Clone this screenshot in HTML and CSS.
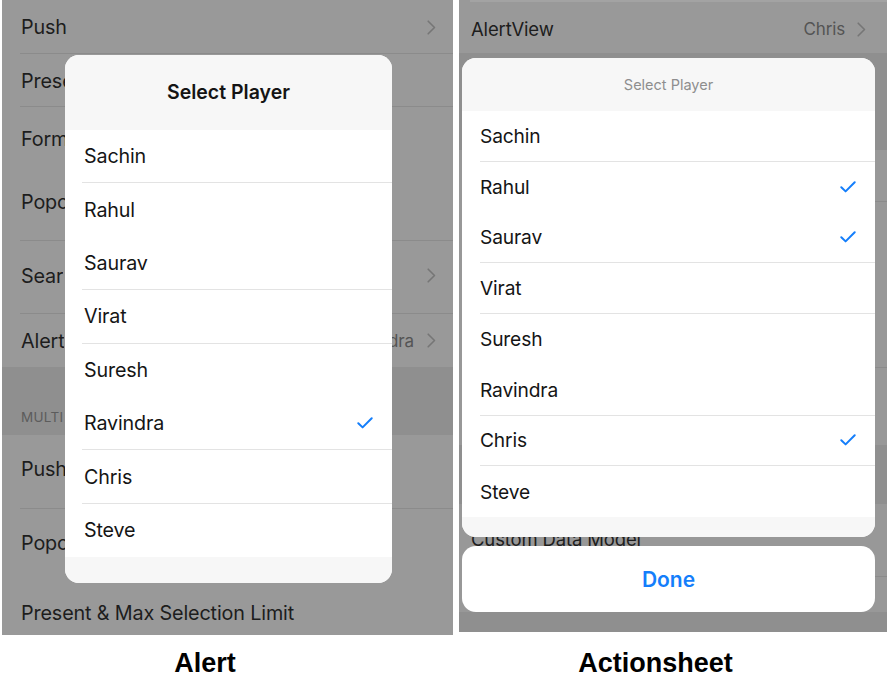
FILE: index.html
```html
<!DOCTYPE html>
<html>
<head>
<meta charset="utf-8">
<link rel="stylesheet" href="styles.css">
</head>
<body>
<div class="stage">
  <div class="panel panel-left">
    <div class="list">
      <div class="row h54 sep"><span class="label">Push</span><span class="acc"><svg class="chev" viewBox="0 0 9 15"><polyline points="1.2,1.2 7.5,7.5 1.2,13.8"/></svg></span></div>
      <div class="row h53 sep"><span class="label under">Prese</span></div>
      <div class="row h63"><span class="label under">Form</span></div>
      <div class="row h71 sep pb8"><span class="label under">Popo</span></div>
      <div class="row h73 sep pb4"><span class="label under">Sear</span><span class="acc"><svg class="chev" viewBox="0 0 9 15"><polyline points="1.2,1.2 7.5,7.5 1.2,13.8"/></svg></span></div>
      <div class="row h53"><span class="label under">Alert</span><span class="acc"><span class="detail-clip"><span class="detail">ndra</span></span><svg class="chev" viewBox="0 0 9 15"><polyline points="1.2,1.2 7.5,7.5 1.2,13.8"/></svg></span></div>
      <div class="section h68"><span class="label under">MULTI</span></div>
      <div class="row h74 sep pb6"><span class="label under">Push</span></div>
      <div class="row h68"><span class="label under">Popo</span></div>
      <div class="row h58 pt14"><span class="label">Present &amp; Max Selection Limit</span></div>
    </div>

    <div class="alert">
      <div class="alert-head">Select Player</div>
      <div class="alert-rows">
        <div class="opt sep">Sachin</div>
        <div class="opt">Rahul</div>
        <div class="opt sep">Saurav</div>
        <div class="opt sep">Virat</div>
        <div class="opt">Suresh</div>
        <div class="opt sep">Ravindra<svg class="check" viewBox="0 0 16 12"><polyline points="1.3,6.2 5.6,10.4 14.7,1.3"/></svg></div>
        <div class="opt sep">Chris</div>
        <div class="opt">Steve</div>
      </div>
      <div class="alert-foot"></div>
    </div>
  </div>

  <div class="panel panel-right">
    <div class="list">
      <div class="row r-top h53 pt5"><span class="label">AlertView</span><span class="acc"><span class="detail">Chris</span><svg class="chev" viewBox="0 0 9 15"><polyline points="1.2,1.2 7.5,7.5 1.2,13.8"/></svg></span></div>
      <div class="section h97"></div>
      <div class="row h52 sep"></div>
      <div class="row h166 sep"></div>
      <div class="row h77"></div>
      <div class="section h59"></div>
      <div class="row h73 sep pb4"><span class="label">Custom Data Model</span></div>
      <div class="row h35"></div>
    </div>

    <div class="sheet-wrap">
      <div class="sheet">
        <div class="sheet-head">Select Player</div>
        <div class="sheet-rows">
          <div class="opt2 sep">Sachin</div>
          <div class="opt2">Rahul<svg class="check" viewBox="0 0 16 12"><polyline points="1.3,6.2 5.6,10.4 14.7,1.3"/></svg></div>
          <div class="opt2 sep">Saurav<svg class="check" viewBox="0 0 16 12"><polyline points="1.3,6.2 5.6,10.4 14.7,1.3"/></svg></div>
          <div class="opt2 sep">Virat</div>
          <div class="opt2">Suresh</div>
          <div class="opt2 sep">Ravindra</div>
          <div class="opt2 sep">Chris<svg class="check" viewBox="0 0 16 12"><polyline points="1.3,6.2 5.6,10.4 14.7,1.3"/></svg></div>
          <div class="opt2">Steve</div>
        </div>
        <div class="sheet-foot"></div>
      </div>
      <div class="done">Done</div>
    </div>
  </div>

  <div class="caption cap-left">Alert</div>
  <div class="caption cap-right">Actionsheet</div>
</div>
</body>
</html>
```

FILE: styles.css
```css
* { box-sizing: border-box; }
html, body { margin: 0; padding: 0; background: #ffffff; }
body { font-family: "Inter", "Noto Sans", sans-serif; }

.stage {
  display: grid;
  grid-template-columns: 451px 428px;
  column-gap: 6px;
  padding-left: 2px;
  align-items: start;
}

.panel {
  position: relative;
  overflow: hidden;
}
.panel-left { height: 635px; background: #999999; }
.panel-right { height: 632px; background: #8f8f8f; }

.list { display: flex; flex-direction: column; }

.row {
  display: flex;
  align-items: center;
  justify-content: space-between;
  padding-left: 19px;
  padding-right: 17px;
  background: #999999;
  font-size: 19.8px;
  color: #1d1d1d;
  letter-spacing: -0.15px;
}
.row.sep {
  background: linear-gradient(#8b8b8b, #8b8b8b) no-repeat right bottom / calc(100% - 18px) 1px, #999999;
}

.h35 { height: 35px; }
.h52 { height: 52px; }
.h53 { height: 53px; }
.h54 { height: 54px; }
.h58 { height: 58px; }
.h59 { height: 59px; }
.h63 { height: 63px; }
.h68 { height: 68px; }
.h71 { height: 71px; }
.h73 { height: 73px; }
.h74 { height: 74px; }
.h77 { height: 77px; }
.h97 { height: 97px; }
.h166 { height: 166px; }
.pb4 { padding-bottom: 4px; }
.pb6 { padding-bottom: 6px; }
.pb8 { padding-bottom: 8px; }
.pt5 { padding-top: 5px; }
.pt14 { padding-top: 14px; }

.label { white-space: nowrap; }
.label.under { display: block; max-width: 44px; overflow: hidden; flex: none; }

.acc { display: flex; align-items: center; gap: 13px; }
.detail { color: #545454; font-size: 17px; white-space: nowrap; }
.detail-clip { display: flex; justify-content: flex-end; width: 22px; overflow: hidden; }
.chev { width: 9px; height: 15px; fill: none; stroke: #767676; stroke-width: 1.6; stroke-linecap: round; stroke-linejoin: round; }

.section {
  display: flex;
  align-items: flex-end;
  padding-left: 19px;
  padding-bottom: 10px;
  background: #8f8f8f;
  color: #5c5c5c;
  font-size: 13.5px;
  letter-spacing: 0.3px;
}

/* Right panel underlay */
.panel-right .row {
  padding-left: 12px;
  padding-right: 21px;
  background: #989898;
  font-size: 18.5px;
}
.panel-right .row.sep {
  background: linear-gradient(#8b8b8b, #8b8b8b) no-repeat right bottom / calc(100% - 11px) 1px, #989898;
}
.panel-right .r-top {
  background: linear-gradient(#a3a3a3, #a3a3a3) no-repeat right top / calc(100% - 11px) 2px, #999999;
}
.panel-right .acc { gap: 12px; }

/* Alert modal */
.alert {
  position: absolute;
  left: 63px;
  top: 55px;
  width: 327px;
  height: 528px;
  border-radius: 14px;
  overflow: hidden;
  background: #ffffff;
  display: flex;
  flex-direction: column;
}
.alert-head {
  height: 75px;
  flex: none;
  display: flex;
  align-items: center;
  justify-content: center;
  background: #f7f7f7;
  font-size: 19.5px;
  font-weight: 600;
  color: #141414;
  padding-bottom: 1px;
}
.alert-rows { display: flex; flex-direction: column; background: #ffffff; }
.opt {
  height: 53.4px;
  margin-left: 17px;
  padding-left: 2px;
  padding-right: 19px;
  display: flex;
  align-items: center;
  justify-content: space-between;
  font-size: 19.7px;
  color: #151515;
  letter-spacing: -0.15px;
}
.opt.sep, .opt2.sep { border-bottom: 1px solid #e3e3e3; }
.alert-foot { flex: 1; background: #f7f7f7; }

.check { width: 16px; height: 12px; fill: none; stroke: #147efb; stroke-width: 2; stroke-linecap: round; stroke-linejoin: round; }

/* Action sheet */
.sheet-wrap {
  position: absolute;
  left: 3px;
  top: 58px;
  width: 413px;
  display: flex;
  flex-direction: column;
  gap: 9px;
}
.sheet {
  height: 479px;
  border-radius: 14px;
  overflow: hidden;
  background: #ffffff;
  display: flex;
  flex-direction: column;
}
.sheet-head {
  height: 53px;
  flex: none;
  display: flex;
  align-items: center;
  justify-content: center;
  background: #f7f7f7;
  font-size: 14.5px;
  color: #8e8e8e;
  padding-bottom: 1px;
}
.sheet-rows { display: flex; flex-direction: column; }
.opt2 {
  height: 50.75px;
  margin-left: 18px;
  padding-right: 19px;
  display: flex;
  align-items: center;
  justify-content: space-between;
  font-size: 19.2px;
  color: #151515;
  letter-spacing: -0.15px;
}
.sheet-foot { flex: 1; background: #f7f7f7; }
.done {
  height: 66px;
  border-radius: 14px;
  background: #ffffff;
  display: flex;
  align-items: center;
  justify-content: center;
  font-size: 21px;
  font-weight: 600;
  color: #147efb;
}

/* Captions */
.caption {
  margin-top: 13px;
  line-height: 30px;
  font-family: "Liberation Sans", Arial, sans-serif;
  font-weight: 700;
  font-size: 27px;
  color: #000000;
  text-align: center;
}
.cap-left { padding-right: 45px; }
.cap-right { padding-right: 35px; }
```
